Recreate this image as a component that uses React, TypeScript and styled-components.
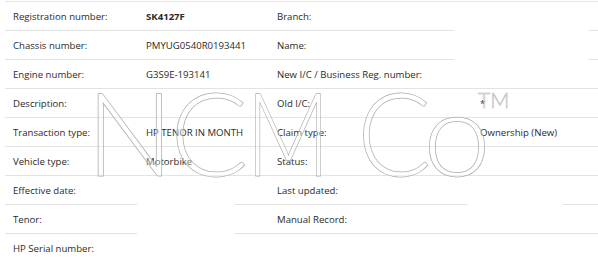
import React from "react";
import styled, { createGlobalStyle } from "styled-components";

type Field = { label: string; value?: string; bold?: boolean; cut?: [number, number] };
type Row = [Field, Field | null];

const rows: Row[] = [
  [{ label: "Registration number:", value: "SK4127F", bold: true }, { label: "Branch:", cut: [-17, 133] }],
  [{ label: "Chassis number:", value: "PMYUG0540R0193441" }, { label: "Name:", cut: [-17, 133] }],
  [{ label: "Engine number:", value: "G3S9E-193141" }, { label: "New I/C / Business Reg. number:" }],
  [{ label: "Description:" }, { label: "Old I/C:", value: "*" }],
  [{ label: "Transaction type:", value: "HP TENOR IN MONTH" }, { label: "Claim type:", value: "Ownership (New)" }],
  [{ label: "Vehicle type:", value: "Motorbike" }, { label: "Status:" }],
  [{ label: "Effective date:", cut: [0, 96] }, { label: "Last updated:", cut: [-4, 94] }],
  [{ label: "Tenor:", cut: [0, 96] }, { label: "Manual Record:" }],
  [{ label: "HP Serial number:" }, null],
];

// watermark letters: [char, box width, horizontal squeeze]
const marks: [string, number, number][] = [
  ["N", 84, 1],
  ["C", 76, 1],
  ["M", 111, 0.8],
  ["C", 66, 0.95],
  ["o", 57, 1.05],
];

const App = () => (
  <>
    <GlobalStyle />
    <Page>
      <Table>
        {rows.map(([left, right], i) => (
          <React.Fragment key={i}>
            <Label $last={i === rows.length - 1}>{left.label}</Label>
            <Value $bold={left.bold} $cut={left.cut} $last={i === rows.length - 1}>
              {left.value}
            </Value>
            <Label $last={i === rows.length - 1}>{right?.label}</Label>
            <Value $bold={right?.bold} $cut={right?.cut} $last={i === rows.length - 1}>
              {right?.value}
            </Value>
          </React.Fragment>
        ))}
      </Table>
      <Watermark aria-hidden>
        {marks.map(([ch, w, sx], i) => (
          <Mark key={i} $w={w} $sx={sx}>
            {ch}
          </Mark>
        ))}
        <Trade>TM</Trade>
      </Watermark>
    </Page>
  </>
);

export default App;

const GlobalStyle = createGlobalStyle`
  body {
    margin: 0;
    background: #fff;
    font-family: "Open Sans", "Noto Sans", sans-serif;
  }
`;

const Page = styled.div`
  position: relative;
  width: 598px;
  height: 273px;
  overflow: hidden;
  padding: 1px 0 0 5px;
  box-sizing: border-box;
`;

const Table = styled.div`
  display: grid;
  grid-template-columns: 133px 131px 203px 1fr;
  border-top: 1px solid #e6e6e6;
`;

const Cell = styled.div<{ $last?: boolean }>`
  height: 28px;
  display: flex;
  align-items: center;
  padding-left: 8px;
  font-size: 9.6px;
  color: #2a2a2a;
  white-space: nowrap;
  border-bottom: 1px solid ${(p) => (p.$last ? "transparent" : "#e3e3e3")};
`;

const Label = styled(Cell)``;

const Value = styled(Cell)<{ $bold?: boolean; $cut?: [number, number] }>`
  position: relative;
  font-weight: ${(p) => (p.$bold ? 700 : 400)};

  &::after {
    content: "";
    display: ${(p) => (p.$cut ? "block" : "none")};
    position: absolute;
    left: ${(p) => (p.$cut ? p.$cut[0] : 0)}px;
    width: ${(p) => (p.$cut ? p.$cut[1] : 0)}px;
    bottom: -1px;
    height: 1px;
    background: #fff;
    box-shadow: 0 0 3px 1px #fff;
  }
`;

const Watermark = styled.div`
  position: absolute;
  left: 86px;
  top: 74px;
  display: flex;
  align-items: flex-start;
  pointer-events: none;
  font-family: "Lato", "Open Sans", sans-serif;
  font-weight: 300;
  line-height: 1;
  color: rgba(255, 255, 255, 0.35);
  -webkit-text-stroke: 0.75px #b0b0b0;
`;

const Mark = styled.span<{ $w: number; $sx: number }>`
  display: inline-block;
  flex: none;
  width: ${(p) => p.$w}px;
  font-size: 116px;
  transform: scaleX(${(p) => p.$sx});
  transform-origin: left top;
`;

const Trade = styled.span`
  font-size: 21px;
  margin-top: 15px;
  margin-left: -2px;
  -webkit-text-stroke: 0.5px #b0b0b0;
`;
